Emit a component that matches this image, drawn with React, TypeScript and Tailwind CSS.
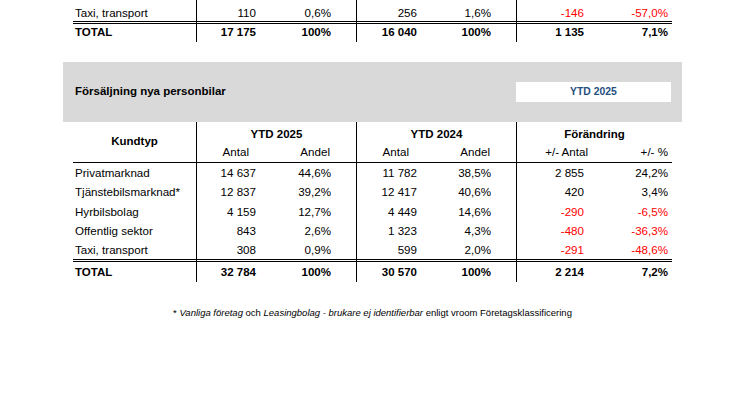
import React from 'react';

type Row = { label: string; v: string[]; neg?: boolean };

const topRows: Row[] = [{ label: 'Taxi, transport', v: ['110', '0,6%', '256', '1,6%', '-146', '-57,0%'], neg: true }];
const topTotal: Row = { label: 'TOTAL', v: ['17 175', '100%', '16 040', '100%', '1 135', '7,1%'] };

const rows: Row[] = [
  { label: 'Privatmarknad', v: ['14 637', '44,6%', '11 782', '38,5%', '2 855', '24,2%'] },
  { label: 'Tjänstebilsmarknad*', v: ['12 837', '39,2%', '12 417', '40,6%', '420', '3,4%'] },
  { label: 'Hyrbilsbolag', v: ['4 159', '12,7%', '4 449', '14,6%', '-290', '-6,5%'], neg: true },
  { label: 'Offentlig sektor', v: ['843', '2,6%', '1 323', '4,3%', '-480', '-36,3%'], neg: true },
  { label: 'Taxi, transport', v: ['308', '0,9%', '599', '2,0%', '-291', '-48,6%'], neg: true },
];
const total: Row = { label: 'TOTAL', v: ['32 784', '100%', '30 570', '100%', '2 214', '7,2%'] };

// one table line; cell holds the vertical padding so text sits like the pdf export
function DataRow({ r, bold, rowCls, cellCls }: { r: Row; bold?: boolean; rowCls: string; cellCls: string }) {
  const txt = bold ? 'font-bold text-[11.5px]' : 'text-[11.6px]';
  const red = r.neg ? 'text-[#ff0000]' : '';
  return (
    <div className={`flex whitespace-nowrap ${txt} ${rowCls}`}>
      <div className={`w-[123px] pl-[2px] ${cellCls}`}>{r.label}</div>
      <div className="flex w-[160px] border-l border-black">
        <div className={`w-[79px] pr-[20px] text-right ${cellCls}`}>{r.v[0]}</div>
        <div className={`w-[80px] pr-[25px] text-right ${cellCls}`}>{r.v[1]}</div>
      </div>
      <div className="flex w-[160px] border-l border-black">
        <div className={`w-[79px] pr-[19px] text-right ${cellCls}`}>{r.v[2]}</div>
        <div className={`w-[80px] pr-[25px] text-right ${cellCls}`}>{r.v[3]}</div>
      </div>
      <div className="flex w-[156px] border-l border-black">
        <div className={`w-[77px] pr-[10px] text-right ${cellCls} ${red}`}>{r.v[4]}</div>
        <div className={`w-[78px] pr-[4px] text-right ${cellCls} ${red}`}>{r.v[5]}</div>
      </div>
    </div>
  );
}

function DoubleLine() {
  return (
    <div className="flex h-[3px] border-y border-black">
      <div className="w-[123px]" />
      <div className="w-[160px] border-l border-black" />
      <div className="w-[160px] border-l border-black" />
      <div className="w-[156px] border-l border-black" />
    </div>
  );
}

function GroupHead({ title, a, b, w, pa, pb, wa, wb }: { title: string; a: string; b: string; w: string; pa: string; pb: string; wa: string; wb: string }) {
  return (
    <div className={`flex flex-col border-l border-black pt-[5px] ${w}`}>
      <div className="text-center text-[11.5px] font-bold leading-[14px]">{title}</div>
      <div className="mt-[4px] flex text-[11.6px] leading-[14px]">
        <div className={`text-right ${wa} ${pa}`}>{a}</div>
        <div className={`text-right ${wb} ${pb}`}>{b}</div>
      </div>
    </div>
  );
}

export default function App() {
  return (
    <div className="h-[419px] w-[746px] bg-white font-['Liberation_Sans',Arial,sans-serif] text-black">
      <div className="pl-[73px]">
        {topRows.map((r) => (
          <DataRow key={r.label} r={r} rowCls="h-[21px]" cellCls="pt-[5.7px] leading-[14.6px]" />
        ))}
        <div className="w-[599px]">
          <DoubleLine />
        </div>
        <DataRow r={topTotal} bold rowCls="h-[18px]" cellCls="pt-[1px] leading-[14.6px]" />
      </div>

      <div className="ml-[63px] mt-[20px] flex h-[60px] w-[619px] items-center bg-[#d9d9d9] pl-[12px] pr-[11px]">
        <div className="flex-1 text-[11.5px] font-bold">Försäljning nya personbilar</div>
        <div className="flex h-[20px] w-[155px] items-center justify-center bg-white text-[10.4px] font-bold text-[#25507f]">
          YTD 2025
        </div>
      </div>

      <div className="ml-[73px] w-[599px]">
        <div className="flex h-[41px] border-b border-black">
          <div className="flex w-[123px] items-center justify-center text-[11.5px] font-bold">Kundtyp</div>
          <GroupHead title="YTD 2025" a="Antal" b="Andel" w="w-[160px]" wa="w-[79px]" wb="w-[80px]" pa="pr-[27px]" pb="pr-[26px]" />
          <GroupHead title="YTD 2024" a="Antal" b="Andel" w="w-[160px]" wa="w-[79px]" wb="w-[80px]" pa="pr-[27px]" pb="pr-[26px]" />
          <GroupHead title="Förändring" a="+/- Antal" b="+/- %" w="w-[156px]" wa="w-[77px]" wb="w-[78px]" pa="pr-[6px]" pb="pr-[4px]" />
        </div>
        {rows.map((r) => (
          <DataRow key={r.label} r={r} rowCls="h-[19.3px]" cellCls="pt-[3px] leading-[14.6px]" />
        ))}
        <DoubleLine />
        <DataRow r={total} bold rowCls="h-[20px]" cellCls="pt-[2.5px] leading-[14.6px]" />

        <p className="mt-[25px] text-center text-[9.5px] leading-[12px]">
          * <i>Vanliga företag</i> och <i>Leasingbolag - brukare ej identifierbar</i> enligt vroom Företagsklassificering
        </p>
      </div>
    </div>
  );
}
